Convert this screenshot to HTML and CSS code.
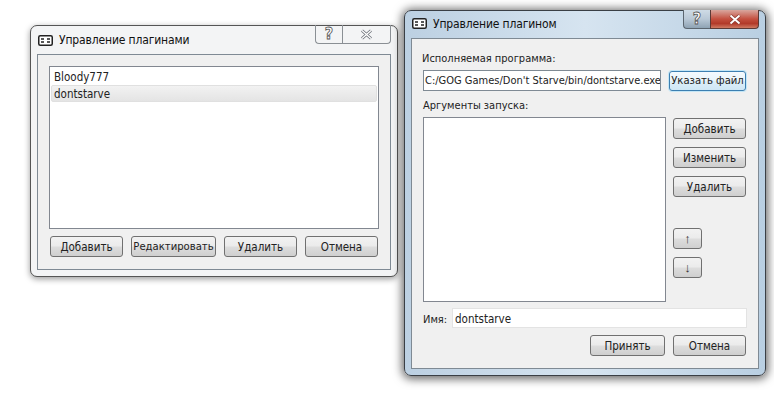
FILE: index.html
```html
<!DOCTYPE html>
<html>
<head>
    <title>Управление плагинами</title>
    <link rel="stylesheet" href="styles.css">
</head>
<body>
    <!-- inactive window -->
    <div class="window window-list">
        <div class="titlebar">
            <svg class="app-icon" width="15" height="11" viewBox="0 0 15 11"><rect x="0.75" y="0.75" width="13.5" height="9.5" rx="1.5" fill="#fff" stroke="#222" stroke-width="1.5"/><path d="M3 4h3M3 7h3M9 4h3M9 7h3" stroke="#222" stroke-width="1.3"/></svg>
            <span class="title">Управление плагинами</span>
            <div class="caption">
                <div class="cap-btn cap-help"><span>?</span></div>
                <div class="cap-btn cap-close">
                    <svg width="13" height="11" viewBox="0 0 13 11"><path d="M2 1.5l9 8M11 1.5l-9 8" stroke="#6b7078" stroke-width="3"/><path d="M2 1.5l9 8M11 1.5l-9 8" stroke="#fff" stroke-width="1.3"/></svg>
                </div>
            </div>
        </div>
        <div class="panel panel-list">
            <div class="listbox">
                <div class="list-item">Bloody777</div>
                <div class="list-item selected">dontstarve</div>
            </div>
            <div class="list-buttons">
                <button class="btn btn-plain">Добавить</button>
                <button class="btn btn-edit">Редактировать</button>
                <button class="btn btn-plain">Удалить</button>
                <button class="btn btn-plain">Отмена</button>
            </div>
        </div>
    </div>

    <!-- active window -->
    <div class="window window-edit">
        <div class="titlebar">
            <svg class="app-icon" width="15" height="11" viewBox="0 0 15 11"><rect x="0.75" y="0.75" width="13.5" height="9.5" rx="1.5" fill="#fff" stroke="#222" stroke-width="1.5"/><path d="M3 4h3M3 7h3M9 4h3M9 7h3" stroke="#222" stroke-width="1.3"/></svg>
            <span class="title">Управление плагином</span>
            <div class="caption">
                <div class="cap-btn cap-help"><span>?</span></div>
                <div class="cap-btn cap-close">
                    <svg width="14" height="11" viewBox="0 0 14 11"><path d="M2.5 1.5l9 8M11.5 1.5l-9 8" stroke="#8a3a30" stroke-width="3.4"/><path d="M2.5 1.5l9 8M11.5 1.5l-9 8" stroke="#fff" stroke-width="1.8"/></svg>
                </div>
            </div>
        </div>
        <div class="panel panel-edit">
            <div class="label label-exe">Исполняемая программа:</div>
            <div class="exe-row">
                <div class="field field-exe">C:/GOG Games/Don't Starve/bin/dontstarve.exe</div>
                <button class="btn btn-file">Указать файл</button>
            </div>
            <div class="label label-args">Аргументы запуска:</div>
            <div class="args-row">
                <div class="args-box"></div>
                <div class="args-buttons">
                    <button class="btn btn-side">Добавить</button>
                    <button class="btn btn-side">Изменить</button>
                    <button class="btn btn-side">Удалить</button>
                    <button class="btn btn-arrow btn-up">↑</button>
                    <button class="btn btn-arrow">↓</button>
                </div>
            </div>
            <div class="name-row">
                <span class="label label-name">Имя:</span>
                <div class="field field-name">dontstarve</div>
            </div>
            <div class="edit-buttons">
                <button class="btn btn-accept">Принять</button>
                <button class="btn btn-side">Отмена</button>
            </div>
        </div>
    </div>
</body>
</html>
```

FILE: styles.css
```css
html, body {
    margin: 0;
    padding: 0;
}

body {
    width: 774px;
    height: 413px;
    overflow: hidden;
    position: relative;
    background-color: #fff;
    font-family: "DejaVu Sans Condensed", "DejaVu Sans", sans-serif;
    font-stretch: condensed;
    font-size: 11.5px;
    color: #222;
}

.window {
    position: absolute;
    box-sizing: border-box;
    border-radius: 7px;
    display: flex;
    flex-direction: column;
}

.window-list {
    left: 30px;
    top: 25px;
    width: 368px;
    height: 252px;
    padding: 0 6px 6px 6px;
    background-color: #f3f4f5;
    border: 1px solid #555;
    box-shadow: 0 2px 6px rgba(0, 0, 0, 0.4);
}

.window-edit {
    left: 404px;
    top: 10px;
    width: 362px;
    height: 366px;
    padding: 0 6px 6px 6px;
    background: linear-gradient(to right, #bcd0e2, #d6e4f0 50%, #b9cfe2);
    border: 1px solid #3a3f45;
    box-shadow: 0 1px 10px 2px rgba(0, 0, 0, 0.6);
}

.titlebar {
    display: flex;
    align-items: center;
    position: relative;
}

.window-list .titlebar {
    height: 28px;
    padding-left: 1px;
}

.window-edit .titlebar {
    box-sizing: border-box;
    height: 27px;
    padding: 0 0 2px 1px;
}

.app-icon {
    margin-right: 6px;
}

.title {
    font-size: 12px;
    letter-spacing: -0.15px;
    color: #111;
}

.caption {
    position: absolute;
    top: -1px;
    right: 0;
    display: flex;
    height: 19px;
}

.cap-btn {
    display: flex;
    align-items: center;
    justify-content: center;
    box-sizing: border-box;
    height: 19px;
    border: 1px solid #8a8f94;
    border-top: none;
}

.cap-help {
    width: 27px;
    border-radius: 0 0 0 4px;
    border-right: none;
    font-weight: bold;
    font-stretch: normal;
    font-size: 16px;
    line-height: 1;
}

.cap-help span {
    color: #fff;
    -webkit-text-stroke: 0.8px #555;
}

.cap-close {
    width: 49px;
    border-radius: 0 0 4px 0;
}

.window-edit .cap-help {
    background: linear-gradient(to bottom, #cfdbe6, #b9c8d6 50%, #8fa3b4);
    border-color: #5c6670;
}

.window-edit .cap-close {
    background: linear-gradient(to bottom, #d9a79e, #c4503f 50%, #b23a2a 75%, #cf7a62);
    border-color: #5c3a36;
}

.panel {
    box-sizing: border-box;
    flex: 1;
    background-color: #f0f0f0;
    border: 1px solid #7f8a94;
}

.panel-list {
    padding: 11px;
    display: flex;
    flex-direction: column;
}

.listbox {
    box-sizing: border-box;
    height: 163px;
    background-color: #fff;
    border: 1px solid #828790;
    padding: 1px;
}

.list-item {
    height: 17px;
    line-height: 19px;
    padding-left: 3px;
}

.list-item.selected {
    border-radius: 2px;
    border: 1px solid #e0e0e0;
    box-sizing: border-box;
    line-height: 17px;
    padding-left: 2px;
    background: linear-gradient(to bottom, #f2f2f2, #e4e4e4);
}

.btn {
    box-sizing: border-box;
    height: 21px;
    padding: 0;
    font-family: inherit;
    font-stretch: inherit;
    font-size: 11.5px;
    color: #222;
    white-space: nowrap;
    border: 1px solid #707070;
    border-radius: 3px;
    background: linear-gradient(to bottom, #f2f2f2 0%, #ebebeb 48%, #dddddd 52%, #cfcfcf 100%);
}

.list-buttons {
    display: flex;
    margin-top: 7px;
    padding-left: 1px;
    gap: 8px;
}

.btn-plain {
    width: 73px;
}

.btn-edit {
    width: 85px;
    font-size: 11.2px;
}

.panel-edit {
    padding: 0 11px;
    display: flex;
    flex-direction: column;
}

.label {
    font-size: 11px;
}

.label-exe {
    line-height: 17px;
    margin: 11px 0 0 -1px;
}

.exe-row {
    display: flex;
    align-items: center;
    margin-top: 3px;
}

.field {
    box-sizing: border-box;
    background-color: #fff;
    border: 1px solid #abadb3;
    white-space: nowrap;
    overflow: hidden;
}

.field-exe {
    width: 238px;
    height: 21px;
    font-size: 11px;
    line-height: 20px;
    padding-left: 1px;
    border-color: #7f8a94;
}

.btn-file {
    width: 77px;
    height: 20px;
    margin-left: 8px;
    font-size: 11.2px;
    border-color: #3c7fb1;
    box-shadow: 0 0 0 1px #c4e6f6;
    background: linear-gradient(to bottom, #f4fafe 0%, #e9f5fb 48%, #dceef8 52%, #cfe7f5 100%);
}

.label-args {
    line-height: 17px;
    margin-top: 6px;
}

.args-row {
    display: flex;
    margin-top: 3px;
}

.args-box {
    box-sizing: border-box;
    width: 243px;
    height: 185px;
    background-color: #fff;
    border: 1px solid #828790;
}

.args-buttons {
    display: flex;
    flex-direction: column;
    align-items: flex-start;
    margin-left: 7px;
    padding-top: 1px;
}

.btn-side {
    width: 73px;
    margin-bottom: 8px;
}

.btn-arrow {
    width: 29px;
    height: 21px;
    margin-bottom: 8px;
    font-family: "Liberation Sans", Arial, sans-serif;
    font-size: 13px;
    color: #333;
}

.btn-up {
    margin-top: 23px;
}

.name-row {
    display: flex;
    align-items: center;
    margin-top: 6px;
}

.label-name {
    width: 29px;
    padding-top: 2px;
}

.field-name {
    width: 295px;
    height: 20px;
    line-height: 21px;
    padding-left: 2px;
    border-color: #e3e3e3;
}

.edit-buttons {
    display: flex;
    justify-content: flex-end;
    margin-top: 7px;
    padding-right: 1px;
    gap: 8px;
}

.edit-buttons .btn {
    margin-bottom: 0;
}

.btn-accept {
    width: 75px;
}
```
